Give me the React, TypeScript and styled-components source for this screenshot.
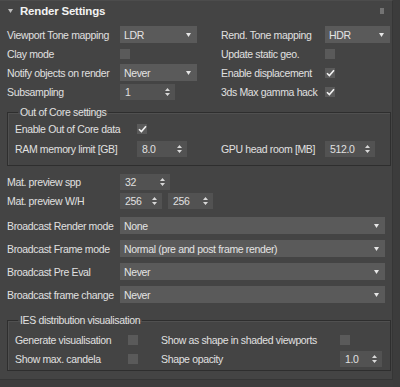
import React from "react";
import styled, { createGlobalStyle } from "styled-components";

const Global = createGlobalStyle`
  html, body { margin: 0; padding: 0; background: #444444; }
  body {
    font-family: "Liberation Sans", Arial, sans-serif;
    font-size: 10.5px;
    letter-spacing: -0.35px;
    color: #e0e0e0;
  }
  * { box-sizing: border-box; }
`;

const Shell = styled.div`
  display: flex;
  width: 400px;
  height: 387px;
  background: #3d3d3d;
`;

const Panel = styled.div`
  width: 393px;
  height: 380px;
  background: #444444;
  border-top: 1px solid #4c4c4c;
  border-right: 1px solid #363636;
  border-bottom: 1px solid #363636;
  display: flex;
  flex-direction: column;
`;

const ScrollStrip = styled.div`
  flex: 1;
  background: #3c3c3c;
`;

const Header = styled.div`
  height: 20px;
  display: flex;
  align-items: center;
  padding-left: 8px;
  position: relative;
`;

const Title = styled.span`
  font-weight: bold;
  font-size: 11.5px;
  letter-spacing: -0.2px;
  color: #f2f2f2;
  margin-left: 7px;
`;

const Grip = styled.div`
  position: absolute;
  right: 8px;
  top: 7px;
  width: 4px;
  height: 6px;
  background-image: radial-gradient(circle, #777 0.7px, transparent 0.8px);
  background-size: 2px 2px;
`;

const Content = styled.div`
  padding: 4px 0 0 7px;
  display: flex;
  flex-direction: column;
`;

const Row = styled.div<{ $cols: string; $h?: number }>`
  display: grid;
  grid-template-columns: ${(p) => p.$cols};
  height: ${(p) => p.$h ?? 19}px;
  align-items: center;
  white-space: nowrap;
`;

const Label = styled.span`
  color: #e0e0e0;
`;

const Drop = styled.div<{ $w: number }>`
  width: ${(p) => p.$w}px;
  height: 17px;
  background: #5a5a5a;
  display: flex;
  align-items: center;
  justify-content: space-between;
  padding: 0 6px 0 4px;
  color: #e4e4e4;
`;

const Spin = styled.div<{ $w: number }>`
  width: ${(p) => p.$w}px;
  height: 16px;
  background: #525252;
  display: flex;
  align-items: center;
  justify-content: space-between;
  padding: 0 5px 0 5px;
  color: #e0e0e0;
`;

const Check = styled.div`
  width: 10px;
  height: 10px;
  background: #5a5a5a;
  display: flex;
  align-items: center;
  justify-content: center;
`;

const Group = styled.fieldset<{ $mt: number; $h: number; $pt?: number }>`
  margin: ${(p) => p.$mt}px 0 0 0;
  padding: ${(p) => p.$pt ?? 0}px 0 0 7px;
  width: 384px;
  height: ${(p) => p.$h}px;
  border: 1px solid #2e2e2e;
  box-shadow: inset 1px 1px 0 #505050;
  min-width: 0;
`;

const Legend = styled.legend`
  padding: 0 2px;
  margin-left: 3px;
  color: #e0e0e0;
  line-height: 13px;
`;

const Pair = styled.div`
  display: flex;
  gap: 6px;
`;

const Arrow = () => (
  <svg width="5" height="4" viewBox="0 0 5 4">
    <path d="M0 0 L5 0 L2.5 4 Z" fill="#e6e6e6" />
  </svg>
);

const SpinArrows = () => (
  <svg width="5" height="8" viewBox="0 0 5 8">
    <path d="M0 3 L5 3 L2.5 0 Z M0 5 L5 5 L2.5 8 Z" fill="#d8d8d8" />
  </svg>
);

const Tick = () => (
  <svg width="9" height="8" viewBox="0 0 9 8">
    <path d="M1 4.2 L3.4 6.6 L8 1.2" stroke="#f2f2f2" strokeWidth="1.6" fill="none" />
  </svg>
);

const Dropdown = ({ w, v }: { w: number; v: string }) => (
  <Drop $w={w}>
    <span>{v}</span>
    <Arrow />
  </Drop>
);

const Spinner = ({ w, v }: { w: number; v: string }) => (
  <Spin $w={w}>
    <span>{v}</span>
    <SpinArrows />
  </Spin>
);

const Box = ({ on }: { on?: boolean }) => <Check>{on && <Tick />}</Check>;

const TOP = "113px 101px 104px 1fr";
const OOC = "122px 84px 104px 1fr";
const IES = "113px 33px 179px 1fr";

export default function App() {
  return (
    <>
      <Global />
      <Shell>
        <Panel>
          <Header>
            <svg width="5" height="4" viewBox="0 0 5 4">
              <path d="M0 0 L5 0 L2.5 4 Z" fill="#bdbdbd" />
            </svg>
            <Title>Render Settings</Title>
            <Grip />
          </Header>
          <Content>
            <Row $cols={TOP}>
              <Label>Viewport Tone mapping</Label>
              <Dropdown w={77} v="LDR" />
              <Label>Rend. Tone mapping</Label>
              <Dropdown w={65} v="HDR" />
            </Row>
            <Row $cols={TOP}>
              <Label>Clay mode</Label>
              <Box />
              <Label>Update static geo.</Label>
              <Box />
            </Row>
            <Row $cols={TOP}>
              <Label>Notify objects on render</Label>
              <Dropdown w={77} v="Never" />
              <Label>Enable displacement</Label>
              <Box on />
            </Row>
            <Row $cols={TOP}>
              <Label>Subsampling</Label>
              <Spinner w={55} v="1" />
              <Label>3ds Max gamma hack</Label>
              <Box on />
            </Row>

            <Group $mt={5} $h={60}>
              <Legend>Out of Core settings</Legend>
              <Row $cols={OOC} $h={20}>
                <Label>Enable Out of Core data</Label>
                <Box on />
              </Row>
              <Row $cols={OOC} $h={20}>
                <Label>RAM memory limit [GB]</Label>
                <Spinner w={50} v="8.0" />
                <Label>GPU head room [MB]</Label>
                <Spinner w={50} v="512.0" />
              </Row>
            </Group>

            <Row $cols={TOP} style={{ marginTop: 6 }}>
              <Label>Mat. preview spp</Label>
              <Spinner w={50} v="32" />
            </Row>
            <Row $cols={TOP}>
              <Label>Mat. preview W/H</Label>
              <Pair>
                <Spinner w={42} v="256" />
                <Spinner w={45} v="256" />
              </Pair>
            </Row>

            <Row $cols="113px 1fr" $h={23} style={{ marginTop: 4 }}>
              <Label>Broadcast Render mode</Label>
              <Dropdown w={265} v="None" />
            </Row>
            <Row $cols="113px 1fr" $h={23}>
              <Label>Broadcast Frame mode</Label>
              <Dropdown w={265} v="Normal (pre and post frame render)" />
            </Row>
            <Row $cols="113px 1fr" $h={23}>
              <Label>Broadcast Pre Eval</Label>
              <Dropdown w={265} v="Never" />
            </Row>
            <Row $cols="113px 1fr" $h={23}>
              <Label>Broadcast frame change</Label>
              <Dropdown w={265} v="Never" />
            </Row>

            <Group $mt={8} $h={57} $pt={3}>
              <Legend>IES distribution visualisation</Legend>
              <Row $cols={IES} $h={19}>
                <Label>Generate visualisation</Label>
                <Box />
                <Label>Show as shape in shaded viewports</Label>
                <Box />
              </Row>
              <Row $cols={IES} $h={19}>
                <Label>Show max. candela</Label>
                <Box />
                <Label>Shape opacity</Label>
                <Spinner w={42} v="1.0" />
              </Row>
            </Group>
          </Content>
        </Panel>
        <ScrollStrip />
      </Shell>
    </>
  );
}
